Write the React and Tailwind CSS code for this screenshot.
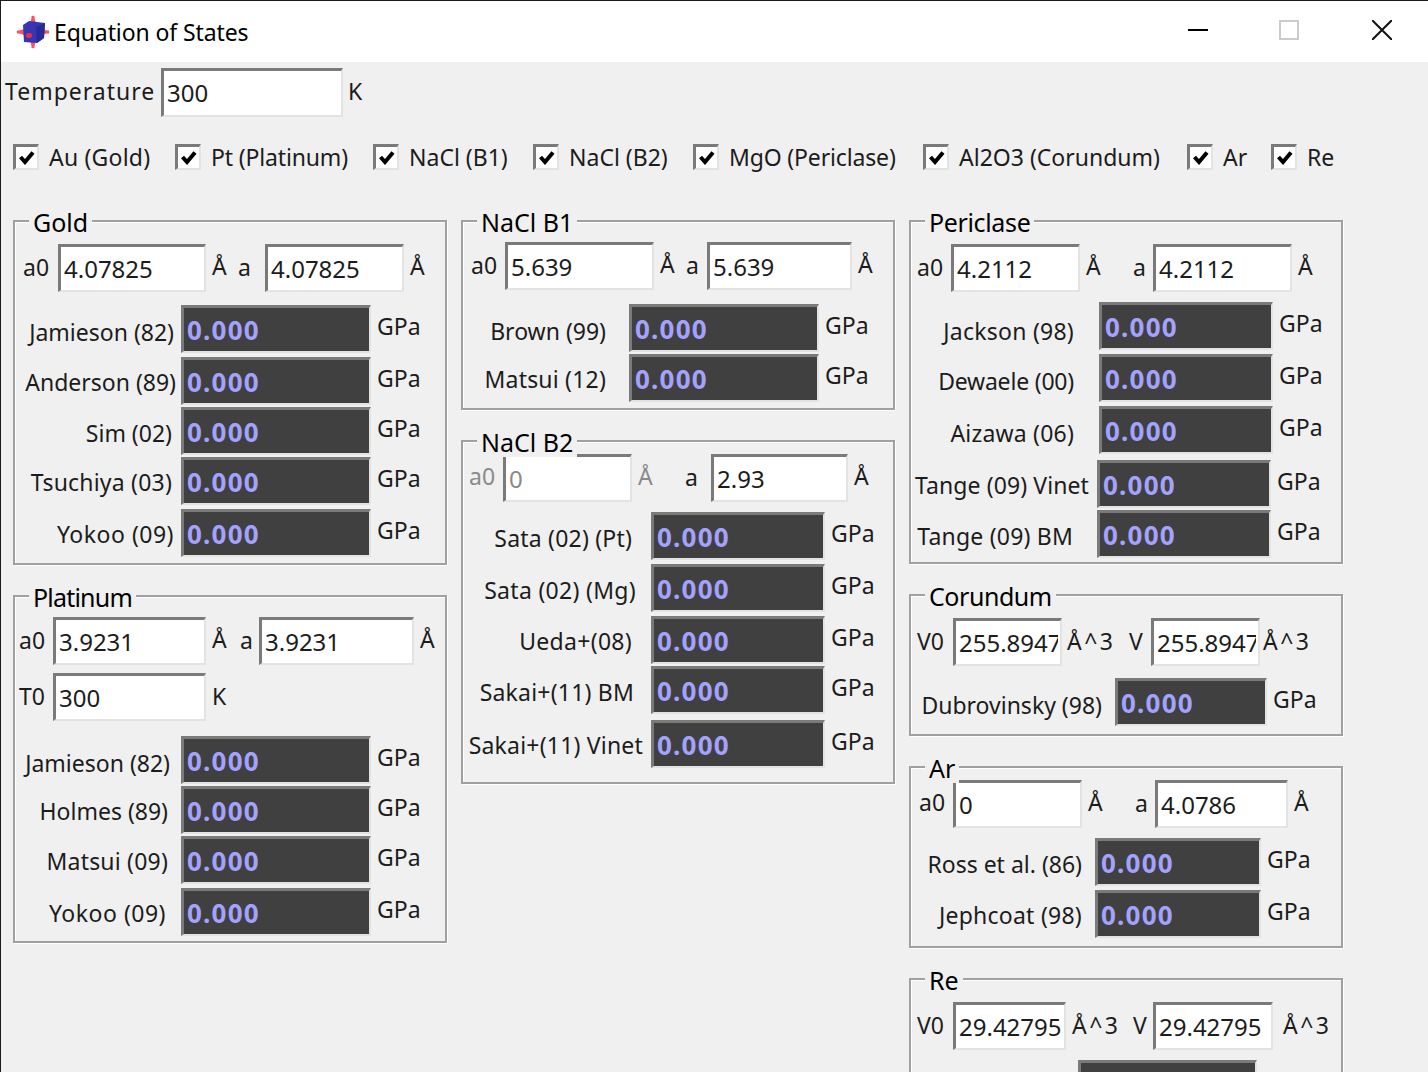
import React from 'react';

const T = ({ className = '', children }) => (
  <span className={`shrink-0 whitespace-nowrap text-[#1c1c1c] ${className}`}>{children}</span>
);

const Input = ({ className = '', valueClass = '', value, disabled }) => (
  <div
    className={`shrink-0 h-[48px] overflow-hidden flex items-center pl-[3px] text-[24px] whitespace-nowrap bg-white border-t-[3px] border-l-[3px] border-r-2 border-b-2 border-t-[#7a7a7a] border-l-[#7a7a7a] border-r-[#e3e3e3] border-b-[#e3e3e3] ${
      disabled ? 'text-[#8a8a8a]' : 'text-[#1c1c1c]'
    } ${className}`}
  >
    <span className={valueClass}>{value}</span>
  </div>
);

const Readout = ({ className = '' }) => (
  <div className={`shrink-0 h-[48px] flex items-center pl-[3px] bg-[#404040] border-t-[3px] border-l-[3px] border-r-2 border-b-2 border-t-[#7a7a7a] border-l-[#7a7a7a] border-r-[#e3e3e3] border-b-[#e3e3e3] font-bold text-[26px] tracking-[1.2px] text-[#a3a3ff] ${className}`}>
    0.000
  </div>
);

const Row = ({ className = '', children }) => <div className={`flex items-center ${className}`}>{children}</div>;

const ReadRow = ({ label, className, labelClass, boxClass, unitClass = 'pl-[6px] -mt-[6px]' }) => (
  <Row className={className}>
    <T className={`text-right ${labelClass}`}>{label}</T>
    <Readout className={boxClass} />
    <T className={unitClass}>GPa</T>
  </Row>
);

const Group = ({ title, titleClass = '', className = '', children }) => (
  <section className={`relative border-2 border-[#a0a0a0] shadow-[1px_1px_0_#ffffff,inset_1px_1px_0_#ffffff] ${className}`}>
    <h2 className={`absolute left-[14px] -top-[15px] px-[4px] bg-[#f0f0f0] text-[25px] leading-[30px] text-black font-normal ${titleClass}`}>{title}</h2>
    {children}
  </section>
);

const Check = ({ label, className, labelClass = '' }) => (
  <label className={`flex items-center shrink-0 ${className}`}>
    <span className="w-[26px] h-[26px] flex items-center justify-center bg-white border-t-[3px] border-l-[3px] border-r-2 border-b-2 border-t-[#7a7a7a] border-l-[#7a7a7a] border-r-[#e3e3e3] border-b-[#e3e3e3]">
      <svg width="16" height="14" viewBox="0 0 16 14">
        <path d="M1.5 6 L6 11 L14 1.5" fill="none" stroke="#000" strokeWidth="4" />
      </svg>
    </span>
    <T className={`ml-[10px] ${labelClass}`}>{label}</T>
  </label>
);

const AppIcon = () => (
  <svg width="34" height="34" viewBox="0 0 34 34" className="blur-[0.7px] shrink-0">
    <path d="M17 0 L20 8 H14 Z M17 34 L20 26 H14 Z M0 17 L8 14 V20 Z M34 17 L26 14 V20 Z" fill="#ff4a5a" />
    <path d="M17 1 V8 M17 26 V33 M1 17 H8 M26 17 H33" stroke="#ff5060" strokeWidth="3" />
    <path d="M7 10 L13 6 L29 8 L28 23 L21 28 L8 27 Z" fill="#3636b4" />
    <path d="M20 12 L29 8 L28 23 L21 28 Z" fill="#2a2a94" />
    <rect x="10" y="18" width="6" height="5" rx="2" fill="#e0304a" />
  </svg>
);

export default function App() {
  return (
    <div className="h-[1072px] w-[1428px] overflow-hidden bg-[#f0f0f0] border-t border-l border-[#1b1b1b] font-['Noto_Sans',sans-serif] text-[23px] leading-[30px]">
      {/* Title bar */}
      <header className="h-[61px] bg-white flex items-center pl-[15px]">
        <AppIcon />
        <span className="ml-[4px] text-black tracking-[-0.1px]">Equation of States</span>
        <div className="ml-auto flex items-center -mt-[3px]">
          <svg width="20" height="20" viewBox="0 0 20 20" className="mr-[71px]"><path d="M0 10 H20" stroke="#000" strokeWidth="2" /></svg>
          <svg width="20" height="20" viewBox="0 0 20 20" className="mr-[73px]"><rect x="1" y="1" width="18" height="18" fill="none" stroke="#cccccc" strokeWidth="2" /></svg>
          <svg width="20" height="20" viewBox="0 0 20 20" className="mr-[36px]"><path d="M0 0 L20 20 M20 0 L0 20" stroke="#111" strokeWidth="2" /></svg>
        </div>
      </header>

      {/* Temperature */}
      <Row className="pl-[4px] pt-[6px]">
        <T className="w-[156px] -mt-[4px] tracking-[1px]">Temperature</T>
        <Input className="w-[182px] h-[49px]" value="300" />
        <T className="pl-[5px] -mt-[4px]">K</T>
      </Row>

      {/* Pressure scale toggles */}
      <div className="flex pl-[12px] mt-[25px]">
        <Check className="w-[162px]" labelClass="tracking-[0.2px]" label="Au (Gold)" />
        <Check className="w-[198px]" labelClass="tracking-[-0.15px]" label="Pt (Platinum)" />
        <Check className="w-[160px]" label="NaCl (B1)" />
        <Check className="w-[160px]" label="NaCl (B2)" />
        <Check className="w-[230px]" labelClass="tracking-[-0.15px]" label="MgO (Periclase)" />
        <Check className="w-[264px]" label="Al2O3 (Corundum)" />
        <Check className="w-[84px]" label="Ar" />
        <Check className="w-[80px]" label="Re" />
      </div>

      <main className="flex gap-[14px] pl-[12px] mt-[48px] items-start">
        {/* Left column */}
        <div className="w-[434px] flex flex-col gap-[30px]">
          <Group title="Gold" className="pt-[22px] pb-[6px]">
            <Row>
              <T className="w-[43px] pl-[8px] -mt-[2px]">a0</T>
              <Input className="w-[148px]" value="4.07825" />
              <T className="w-[32px] pl-[6px] -mt-[4px]">Å</T>
              <T className="w-[27px] -mt-[2px]">a</T>
              <Input className="w-[139px]" value="4.07825" />
              <T className="pl-[6px] -mt-[4px]">Å</T>
            </Row>
            <ReadRow className="mt-[13px]" label="Jamieson (82)" labelClass="w-[166px] pr-[7px] mt-[6px]" boxClass="w-[190px]" />
            <ReadRow className="mt-[4px]" label="Anderson (89)" labelClass="w-[166px] pr-[5px] mt-[2px]" boxClass="w-[190px]" />
            <ReadRow className="mt-[2px]" label="Sim (02)" labelClass="w-[166px] pr-[9px] mt-[4px]" boxClass="w-[190px]" />
            <ReadRow className="mt-[2px]" label="Tsuchiya (03)" labelClass="w-[166px] pr-[9px] mt-[2px] tracking-[0.2px]" boxClass="w-[190px]" />
            <ReadRow className="mt-[4px]" label="Yokoo (09)" labelClass="w-[166px] pr-[7px] mt-[2px] tracking-[0.5px]" boxClass="w-[190px]" />
          </Group>

          <Group title="Platinum" titleClass="tracking-[-0.8px]" className="pt-[20px] pb-[5px]">
            <Row>
              <T className="w-[38px] pl-[4px] -mt-[2px]">a0</T>
              <Input className="w-[153px]" value="3.9231" />
              <T className="w-[34px] pl-[6px] -mt-[4px]">Å</T>
              <T className="w-[19px] -mt-[2px]">a</T>
              <Input className="w-[155px]" value="3.9231" />
              <T className="pl-[6px] -mt-[4px]">Å</T>
            </Row>
            <Row className="mt-[8px]">
              <T className="w-[38px] pl-[4px] -mt-[2px]">T0</T>
              <Input className="w-[153px]" value="300" />
              <T className="pl-[6px] -mt-[2px]">K</T>
            </Row>
            <ReadRow className="mt-[15px]" label="Jamieson (82)" labelClass="w-[166px] pr-[11px] mt-[6px]" boxClass="w-[190px]" />
            <ReadRow className="mt-[2px]" label="Holmes (89)" labelClass="w-[166px] pr-[13px] mt-[2px]" boxClass="w-[190px]" />
            <ReadRow className="mt-[2px]" label="Matsui (09)" labelClass="w-[166px] pr-[13px] mt-[2px] tracking-[0.2px]" boxClass="w-[190px]" />
            <ReadRow className="mt-[4px]" label="Yokoo (09)" labelClass="w-[166px] pr-[15px] mt-[2px] tracking-[0.5px]" boxClass="w-[190px]" />
          </Group>
        </div>

        {/* Middle column */}
        <div className="w-[434px] flex flex-col gap-[30px]">
          <Group title="NaCl B1" className="pt-[20px] pb-[6px]">
            <Row>
              <T className="w-[42px] pl-[8px] -mt-[2px]">a0</T>
              <Input className="w-[149px]" value="5.639" />
              <T className="w-[32px] pl-[6px] -mt-[4px]">Å</T>
              <T className="w-[21px] -mt-[2px]">a</T>
              <Input className="w-[145px]" value="5.639" />
              <T className="pl-[6px] -mt-[4px]">Å</T>
            </Row>
            <ReadRow className="mt-[14px]" label="Brown (99)" labelClass="w-[166px] pr-[23px] mt-[6px]" boxClass="w-[190px]" />
            <ReadRow className="mt-[2px]" label="Matsui (12)" labelClass="w-[166px] pr-[23px] mt-[2px] tracking-[0.2px]" boxClass="w-[190px]" />
          </Group>

          <Group title="NaCl B2" className="pt-[12px] pb-[14px]">
            <Row>
              <T className="w-[40px] pl-[6px] -mt-[4px] !text-[#8a8a8a]">a0</T>
              <Input className="w-[129px]" value="0" disabled />
              <T className="w-[53px] pl-[6px] -mt-[4px] !text-[#8a8a8a]">Å</T>
              <T className="w-[26px] -mt-[2px]">a</T>
              <Input className="w-[137px]" value="2.93" />
              <T className="pl-[6px] -mt-[4px]">Å</T>
            </Row>
            <ReadRow className="mt-[10px]" label="Sata (02) (Pt)" labelClass="w-[188px] pr-[19px] mt-[4px] tracking-[0.2px]" boxClass="w-[174px]" />
            <ReadRow className="mt-[4px]" label="Sata (02) (Mg)" labelClass="w-[188px] pr-[15px] mt-[4px] tracking-[0.3px]" boxClass="w-[174px]" />
            <ReadRow className="mt-[4px]" label="Ueda+(08)" labelClass="w-[188px] pr-[19px] mt-[2px] tracking-[0.3px]" boxClass="w-[174px]" />
            <ReadRow className="mt-[2px]" label="Sakai+(11) BM" labelClass="w-[188px] pr-[17px] mt-[4px] tracking-[0.2px]" boxClass="w-[174px]" />
            <ReadRow className="mt-[6px]" label="Sakai+(11) Vinet" labelClass="w-[188px] pr-[8px] mt-[2px] tracking-[0.2px]" boxClass="w-[174px]" />
          </Group>
        </div>

        {/* Right column */}
        <div className="w-[434px] flex flex-col gap-[30px]">
          <Group title="Periclase" titleClass="tracking-[-0.35px]" className="pt-[22px] pb-[4px]">
            <Row>
              <T className="w-[40px] pl-[6px] -mt-[2px]">a0</T>
              <Input className="w-[129px]" value="4.2112" />
              <T className="w-[53px] pl-[6px] -mt-[4px]">Å</T>
              <T className="w-[20px] -mt-[2px]">a</T>
              <Input className="w-[139px]" value="4.2112" />
              <T className="pl-[6px] -mt-[4px]">Å</T>
            </Row>
            <ReadRow className="mt-[10px]" label="Jackson (98)" labelClass="w-[188px] pr-[25px] mt-[10px] tracking-[0.25px]" boxClass="w-[174px]" />
            <ReadRow className="mt-[4px]" label="Dewaele (00)" labelClass="w-[188px] pr-[25px] mt-[6px] tracking-[-0.2px]" boxClass="w-[174px]" />
            <ReadRow className="mt-[4px]" label="Aizawa (06)" labelClass="w-[188px] pr-[25px] mt-[6px] tracking-[0.2px]" boxClass="w-[174px]" />
            <ReadRow className="mt-[6px]" label="Tange (09) Vinet" labelClass="w-[186px] pr-[8px] mt-[2px] tracking-[0.1px]" boxClass="w-[174px]" />
            <ReadRow className="mt-[2px]" label="Tange (09) BM" labelClass="w-[186px] pr-[24px] mt-[4px] tracking-[0.2px]" boxClass="w-[174px]" />
          </Group>

          <Group title="Corundum" titleClass="tracking-[-0.45px]" className="pt-[22px] pb-[8px]">
            <Row>
              <T className="w-[42px] pl-[6px] -mt-[2px]">V0</T>
              <Input className="w-[109px]" valueClass="block overflow-hidden w-[99px]" value="255.8947" />
              <T className="w-[67px] pl-[5px] -mt-[2px] tracking-[2.5px]">Å^3</T>
              <T className="w-[22px] -mt-[2px]">V</T>
              <Input className="w-[109px]" valueClass="block overflow-hidden w-[99px]" value="255.8947" />
              <T className="pl-[3px] -mt-[2px] tracking-[2.5px]">Å^3</T>
            </Row>
            <ReadRow className="mt-[12px]" label="Dubrovinsky (98)" labelClass="w-[204px] pr-[13px] mt-[6px]" boxClass="w-[152px]" />
          </Group>

          <Group title="Ar" className="pt-[12px] pb-[8px]">
            <Row>
              <T className="w-[42px] pl-[8px] -mt-[4px]">a0</T>
              <Input className="w-[129px]" value="0" />
              <T className="w-[53px] pl-[6px] -mt-[4px]">Å</T>
              <T className="w-[20px] -mt-[2px]">a</T>
              <Input className="w-[133px]" value="4.0786" />
              <T className="pl-[6px] -mt-[4px]">Å</T>
            </Row>
            <ReadRow className="mt-[10px]" label="Ross et al. (86)" labelClass="w-[184px] pr-[13px] mt-[4px]" boxClass="w-[166px]" />
            <ReadRow className="mt-[4px]" label="Jephcoat (98)" labelClass="w-[184px] pr-[13px] mt-[2px] tracking-[0.25px]" boxClass="w-[166px]" />
          </Group>

          <Group title="Re" className="pt-[22px] pb-[8px]">
            <Row>
              <T className="w-[42px] pl-[6px] -mt-[2px]">V0</T>
              <Input className="w-[113px]" value="29.42795" />
              <T className="w-[67px] pl-[6px] -mt-[2px] tracking-[2.5px]">Å^3</T>
              <T className="w-[20px] -mt-[2px]">V</T>
              <Input className="w-[120px]" value="29.42795" />
              <T className="pl-[10px] -mt-[2px] tracking-[2.5px]">Å^3</T>
            </Row>
            <Row className="mt-[10px]">
              <div className="w-[167px] shrink-0" />
              <Readout className="w-[179px]" />
            </Row>
          </Group>
        </div>
      </main>
    </div>
  );
}
